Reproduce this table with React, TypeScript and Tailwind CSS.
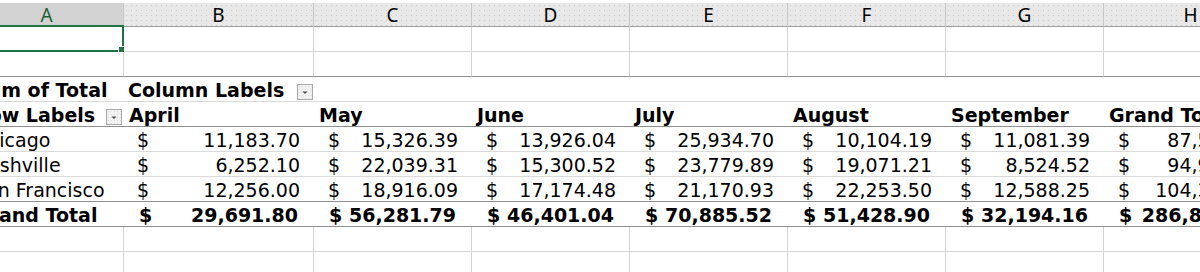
const grid = 'grid grid-cols-[154px_190px_158px_158px_158px_158px_158px_174px]';
const letters = ['A', 'B', 'C', 'D', 'E', 'F', 'G', 'H'];
const months = ['April', 'May', 'June', 'July', 'August', 'September', 'Grand Total'];

const rows = [
  { label: 'Chicago', values: ['11,183.70', '15,326.39', '13,926.04', '25,934.70', '10,104.19', '11,081.39', '87,556.41'], line: 'border-b-[#dadada]' },
  { label: 'Nashville', values: ['6,252.10', '22,039.31', '15,300.52', '23,779.89', '19,071.21', '8,524.52', '94,967.55'], line: 'border-b-[#dadada]' },
  { label: 'San Francisco', values: ['12,256.00', '18,916.09', '17,174.48', '21,170.93', '22,253.50', '12,588.25', '104,359.25'], line: 'border-b-[#8f8f8f]' },
];
const totals = ['29,691.80', '56,281.79', '46,401.04', '70,885.52', '51,428.90', '32,194.16', '286,883.21'];

export default function App() {
  return (
    <div className="w-[1200px] h-[272px] overflow-hidden bg-white text-black">
      <div className="-ml-[30px] w-[1278px]">
        {/* column headers */}
        <div className={`${grid} h-[27px] pt-[3px] bg-white font-['Noto_Sans',sans-serif] text-[19px]`}>
          {letters.map((l, i) => (
            <div
              key={l}
              className={`flex items-center justify-center border-r border-b border-r-[#c6c6c6] border-b-[#a0a0a0] leading-none pt-[1px] ${
                i === 0
                  ? 'bg-[#d2d2d2] text-[#1f5f3a]'
                  : 'bg-[#e8e8e8] bg-[radial-gradient(circle,#cbcbcb_0.7px,transparent_0.9px)] bg-[length:5px_5px]'
              }`}
            >
              {l}
            </div>
          ))}
        </div>

        <div className="font-['DejaVu_Sans','Verdana',sans-serif] text-[19px] leading-[20px]">
          <EmptyRow selected />
          <EmptyRow dark />

          {/* pivot: value header row */}
          <div className={`${grid} h-[25px] border-b border-[#dadada]`}>
            <div className="flex items-end pl-1 pb-[1px] font-bold whitespace-nowrap">Sum of Total</div>
            <div className="flex items-end justify-between pl-1 pr-[1px] pb-[1px] font-bold whitespace-nowrap">
              <span>Column Labels</span>
              <FilterButton />
            </div>
          </div>

          {/* pivot: column labels row */}
          <div className={`${grid} h-[25px] border-b border-[#8f8f8f]`}>
            <div className="flex items-end justify-between pl-1 pr-[2px] pb-[1px] font-bold whitespace-nowrap">
              <span>Row Labels</span>
              <FilterButton />
            </div>
            {months.map((m) => (
              <div key={m} className="flex items-end pl-[5px] pb-[1px] font-bold whitespace-nowrap">
                {m}
              </div>
            ))}
          </div>

          {rows.map((r) => (
            <div key={r.label} className={`${grid} h-[25px] border-b ${r.line}`}>
              <div className="flex items-end pl-1 pb-[1px] whitespace-nowrap">{r.label}</div>
              {r.values.map((v, i) => (
                <div key={i} className={`flex items-end justify-between pb-[1px] pr-[14px] whitespace-nowrap ${i === 0 ? 'pl-[13px]' : 'pl-[14px]'}`}>
                  <span>$</span>
                  <span>{v}</span>
                </div>
              ))}
            </div>
          ))}

          {/* grand total */}
          <div className={`${grid} h-[25px] border-b border-[#8f8f8f] font-bold`}>
            <div className="flex items-end pl-1 pb-[1px] whitespace-nowrap">Grand Total</div>
            {totals.map((v, i) => (
              <div key={i} className="flex items-end justify-between pb-[1px] pl-[15px] pr-[16px] whitespace-nowrap">
                <span>$</span>
                <span>{v}</span>
              </div>
            ))}
          </div>

          <EmptyRow />
          <EmptyRow />
        </div>
      </div>
    </div>
  );
}

function EmptyRow({ dark, selected }: { dark?: boolean; selected?: boolean }) {
  return (
    <div className={`${grid} h-[25px]`}>
      {letters.map((l, i) => (
        <div
          key={l}
          className={`relative border-r border-b border-r-[#d4d4d4] ${dark ? 'border-b-[#8f8f8f]' : 'border-b-[#d4d4d4]'}`}
        >
          {selected && i === 0 && (
            <div className="absolute -top-[2px] -right-[1px] -bottom-[1px] -left-[2px] z-10 border-2 border-[#217346]">
              <div className="absolute -right-[3px] -bottom-[3px] w-[7px] h-[7px] bg-[#217346] border border-white" />
            </div>
          )}
        </div>
      ))}
    </div>
  );
}

function FilterButton() {
  return (
    <div className="w-[16px] h-[16px] shrink-0 border border-[#a8a8a8] bg-[#f2f2f2] bg-[radial-gradient(circle,#dcdcdc_0.6px,transparent_0.8px)] bg-[length:3px_3px] flex items-center justify-center">
      <svg width="14" height="14" viewBox="0 0 14 14">
        <polygon points="4.5,6.5 9.5,6.5 7,9" fill="#4a4a4a" />
      </svg>
    </div>
  );
}
